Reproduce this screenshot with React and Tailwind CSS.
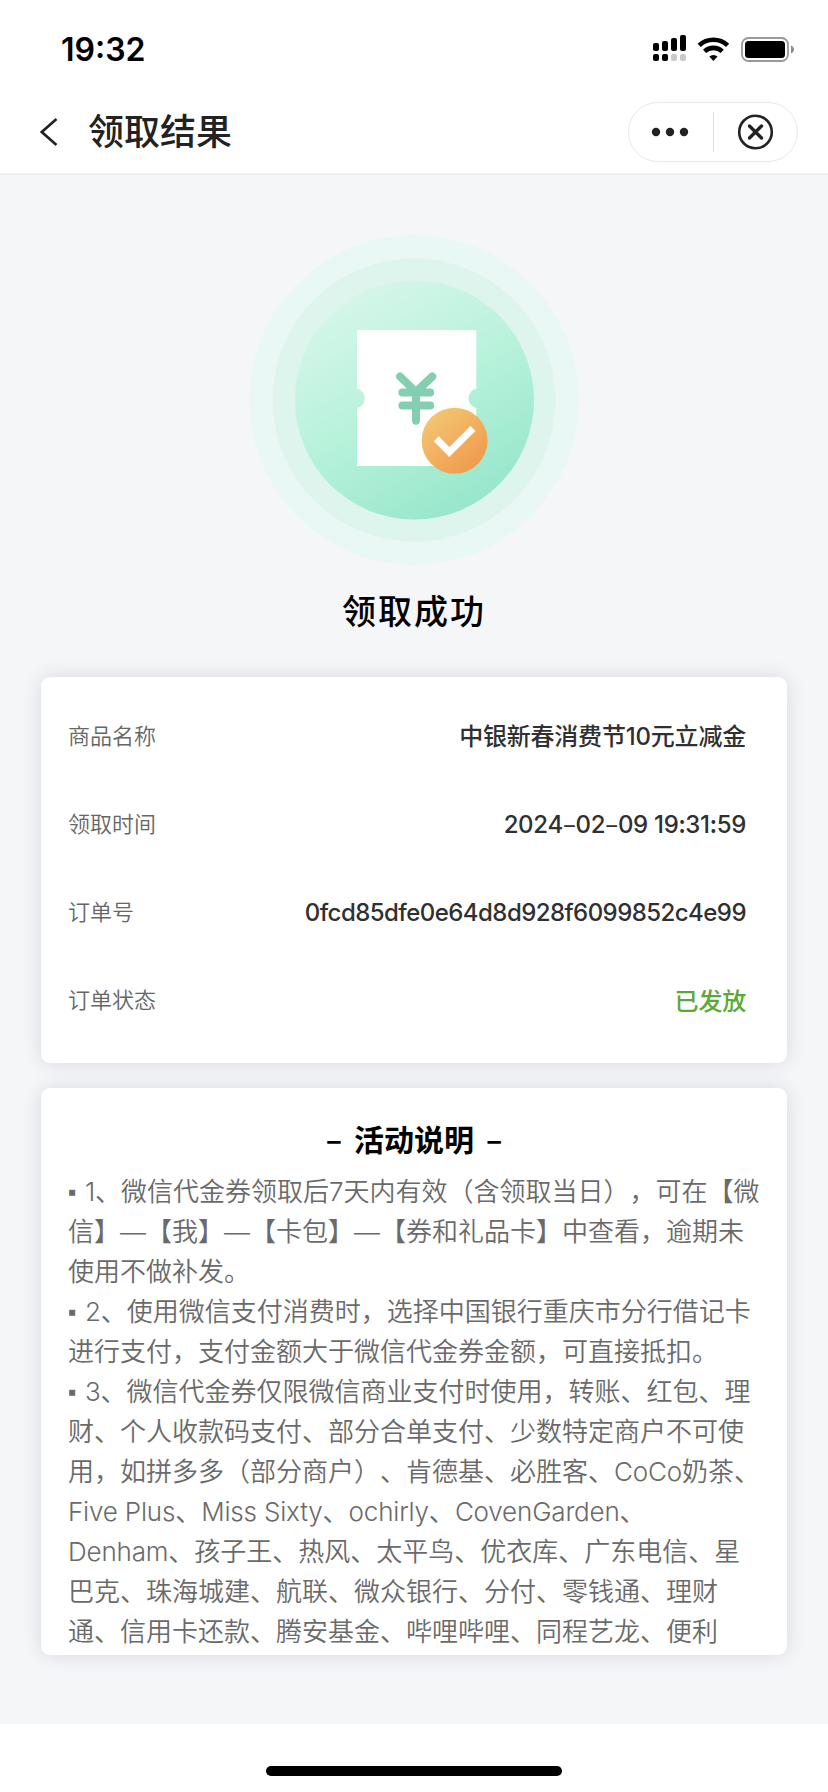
import React from 'react';

const details = [
  { label: '商品名称', value: '中银新春消费节10元立减金', color: 'text-[#303030]', spacing: 'tracking-[-0.2px]' },
  { label: '领取时间', value: '2024–02–09 19:31:59', color: 'text-[#303030]', spacing: 'tracking-[-0.3px]' },
  { label: '订单号', value: '0fcd85dfe0e64d8d928f6099852c4e99', color: 'text-[#303030]', spacing: 'tracking-[-0.55px]' },
  { label: '订单状态', value: '已发放', color: 'text-[#5aa935]', spacing: 'tracking-[-0.2px]' }
];

const rules = [
  '▪ 1、微信代金券领取后7天内有效（含领取当日），可在【微',
  '信】—【我】—【卡包】—【券和礼品卡】中查看，逾期未',
  '使用不做补发。',
  '▪ 2、使用微信支付消费时，选择中国银行重庆市分行借记卡',
  '进行支付，支付金额大于微信代金券金额，可直接抵扣。',
  '▪ 3、微信代金券仅限微信商业支付时使用，转账、红包、理',
  '财、个人收款码支付、部分合单支付、少数特定商户不可使',
  '用，如拼多多（部分商户）、肯德基、必胜客、CoCo奶茶、',
  'Five Plus、Miss Sixty、ochirly、CovenGarden、',
  'Denham、孩子王、热风、太平鸟、优衣库、广东电信、星',
  '巴克、珠海城建、航联、微众银行、分付、零钱通、理财',
  '通、信用卡还款、腾安基金、哔哩哔哩、同程艺龙、便利'
];

const StatusIcons = () => (
  <svg className="w-[142px] h-7" viewBox="653 34 142 28">
    <rect x="653" y="43" width="6" height="8" rx="2" />
    <rect x="662" y="41" width="6" height="10" rx="2" />
    <rect x="671" y="38" width="6" height="13" rx="2" />
    <rect x="680" y="35" width="6" height="16" rx="2" />
    <rect x="653" y="54" width="6" height="7" rx="2" />
    <rect x="662" y="54" width="6" height="7" rx="2" />
    <rect x="671" y="54" width="6" height="7" rx="2" fill="#c9c9c9" />
    <rect x="680" y="54" width="6" height="7" rx="2" fill="#c9c9c9" />
    <g fill="none" stroke="#000" strokeWidth="4.6">
      <path d="M699.2 45.4a20.5 20.5 0 0 1 28.4 0" />
      <path d="M704.6 51.4a12.8 12.8 0 0 1 17.6 0" />
    </g>
    <path d="M709.3 56.6a6.2 6.2 0 0 1 8.2 0l-4.1 4.3z" />
    <rect x="742" y="38" width="46" height="23" rx="6.5" fill="none" stroke="#999" strokeWidth="1.8" />
    <rect x="745" y="41" width="40" height="17" rx="3.5" />
    <path d="M791 45.5c4 1.4 4 6.6 0 8z" fill="#8c8c8c" />
  </svg>
);

const CouponBadge = () => (
  <svg className="w-[330px] h-[330px]" viewBox="248 235 330 330">
    <defs>
      <linearGradient id="disc" x1="0.25" y1="0.05" x2="0.75" y2="0.95">
        <stop offset="0" stopColor="#d5f6e9" />
        <stop offset="0.5" stopColor="#b7f2db" />
        <stop offset="1" stopColor="#97e6cb" />
      </linearGradient>
      <linearGradient id="tick" x1="0.15" y1="0.1" x2="0.85" y2="0.9">
        <stop offset="0" stopColor="#f2c672" />
        <stop offset="1" stopColor="#f09a4c" />
      </linearGradient>
    </defs>
    <circle cx="413" cy="400" r="165" fill="#e9f7f5" />
    <circle cx="413" cy="400" r="141.5" fill="#ddf5ed" />
    <circle cx="413.5" cy="400" r="119.5" fill="url(#disc)" />
    <path
      d="M356 330h119.300v58.500a10 10 0 0 0 0 19.500v58H356v-58a10 10 0 0 0 0-19.500z"
      fill="#fff"
    />
    <g fill="none" stroke="#83cfb0" strokeWidth="8" strokeLinecap="round" strokeLinejoin="round">
      <path d="M399 376.500l16 15.500 16.300-15.500M415 392v28.800M401.400 392.600h27.800M401.400 405.600h27.800" />
    </g>
    <circle cx="453.6" cy="440.7" r="33" fill="url(#tick)" />
    <path
      d="M435.300 438.800l13 13.200 23.700-23.500"
      fill="none"
      stroke="#fff"
      strokeWidth="7"
    />
  </svg>
);

// Latin runs use their own typeface, bullets and dashes get a fixed advance
const MixedText = ({ text, latin = '' }) =>
  text.split(/([A-Za-z0-9][A-Za-z0-9 ]*|▪ |—)/).map((part, i) => {
    if (i % 2 === 0) return part;
    if (part === '▪ ') {
      return (
        <span
          key={i}
          className="inline-block w-[17px] align-[1px] font-['DejaVu_Sans',sans-serif] text-2xl leading-none"
        >
          ▪
        </span>
      );
    }
    if (part === '—') {
      return (
        <span key={i} className="inline-block w-[26px] scale-x-125 text-center">
          {part}
        </span>
      );
    }
    return (
      <span key={i} className={`font-['Inter','Noto_Sans_CJK_SC',sans-serif] ${latin}`}>
        {part}
      </span>
    );
  });

const Card = ({ className, children }) => (
  <section className={`rounded-[9px] bg-white shadow-[0_0_20px_rgba(0,20,30,0.12)] ${className}`}>
    {children}
  </section>
);

const App = () => (
  <div className="flex h-[1792px] w-[828px] flex-col overflow-hidden bg-white font-['Noto_Sans_CJK_SC',sans-serif] [text-spacing-trim:space-all]">
    <header className="h-[175px] shrink-0 border-b-2 border-[#eeeff4]">
      <div className="flex h-[92px] items-start justify-between pt-[34px] pr-[33px] pl-[61px]">
        <span className="font-['Inter',sans-serif] text-[32px] leading-8 font-semibold">19:32</span>
        <StatusIcons />
      </div>
      <div className="flex h-20 items-center pr-[30px] pl-10">
        <svg className="h-7 w-[18px]" viewBox="0 0 18 28" fill="none" stroke="#222" strokeWidth="2.6">
          <path d="M16.500 1L1.800 14l14.700 13" />
        </svg>
        <h1 className="ml-[30px] pb-1.5 text-[36px] leading-[48px] font-medium text-[#222]">领取结果</h1>
        <div className="ml-auto flex h-[60px] w-[170px] items-center rounded-full border border-[#e9e9e9]">
          <svg className="h-10 w-[84px]" viewBox="0 0 84 40" fill="#222">
            <circle cx="27" cy="20" r="4.2" />
            <circle cx="41" cy="20" r="4.2" />
            <circle cx="55" cy="20" r="4.2" />
          </svg>
          <span className="h-10 w-px bg-[#dedede]" />
          <svg className="h-10 w-[83px]" viewBox="0 0 83 40" fill="none" stroke="#222">
            <circle cx="41.5" cy="20" r="16.3" strokeWidth="2.6" />
            <path d="M35.500 14l12 12M47.500 14l-12 12" strokeWidth="3.4" strokeLinecap="round" />
          </svg>
        </div>
      </div>
    </header>

    <main className="flex h-[1549px] shrink-0 flex-col items-center bg-[#f5f6f8] pt-[60px]">
      <CouponBadge />
      <h2 className="mt-[21px] h-12 text-[34px] leading-[48px] font-medium tracking-[2px] text-black">领取成功</h2>

      <Card className="mt-[43px] h-[386px] w-[746px] pt-[15px] pr-[41px] pl-[27px]">
        {details.map((item) => (
          <div key={item.label} className="flex h-[88px] items-center justify-between">
            <span className="pb-1 text-[22px] font-[350] text-[#666]">{item.label}</span>
            <span className={`text-2xl font-medium ${item.spacing} ${item.color}`}>
              <MixedText text={item.value} />
            </span>
          </div>
        ))}
      </Card>

      <Card className="mt-[25px] h-[567px] w-[746px] overflow-hidden pt-[30px] pl-[27px]">
        <h3 className="mb-3 flex h-10 justify-center gap-3 pr-[27px] text-[30px] leading-10 font-bold text-black">
          <span>–</span>
          <span>活动说明</span>
          <span>–</span>
        </h3>
        {rules.map((line) => (
          <p key={line} className="h-10 text-[26px] leading-10 font-[350] whitespace-nowrap text-[#6a6a6a]">
            <MixedText text={line} latin="tracking-[-0.18px]" />
          </p>
        ))}
      </Card>
    </main>

    <footer className="flex grow justify-center pt-[42px]">
      <div className="h-2.5 w-[296px] rounded-full bg-black" />
    </footer>
  </div>
);

export default App;
